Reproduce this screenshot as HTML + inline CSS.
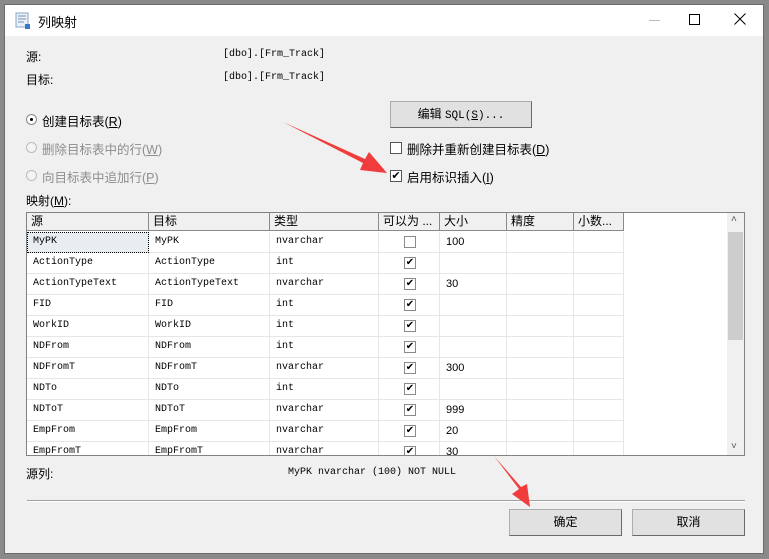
<!DOCTYPE html>
<html><head><meta charset="utf-8"><style>
*{margin:0;padding:0;box-sizing:border-box}
body{width:769px;height:559px;background:#8a8a8a;position:relative;overflow:hidden;font-family:"Liberation Sans","Noto Sans CJK SC",sans-serif;font-size:12px;color:#000}
.win{position:absolute;left:4px;top:4px;width:760px;height:550px;background:#f0f0f0;border:1px solid #6a6a6a}
.title{position:absolute;left:0;top:0;width:758px;height:31px;background:#fff}
.a{position:absolute;white-space:nowrap}
.mono{font-family:"Liberation Mono","Noto Sans CJK SC",monospace;font-size:10px}
.btn{position:absolute;background:#e1e1e1;border:1px solid #adadad;border-right-color:#6a6a6a;border-bottom-color:#6a6a6a;text-align:center}
.cb{position:absolute;width:12px;height:12px;border:1px solid #555;background:#fff}
.grid{position:absolute;left:21px;top:207px;width:719px;height:244px;background:#fff;border:1px solid #828282;overflow:hidden}
.cell{position:absolute;height:21px;line-height:20px;padding-left:6px;border-right:1px solid #e6e6e6;border-bottom:1px solid #e6e6e6;font-family:"Liberation Mono",monospace;font-size:10px;white-space:nowrap}
.hd{position:absolute;top:0;height:18px;line-height:17px;padding-left:4px;background:#f0f0f0;border-right:1px solid #8a8a8a;border-bottom:1px solid #8a8a8a;font-size:12px;white-space:nowrap}
.gcb{position:absolute;width:12px;height:12px;border:1px solid #8a8a8a;background:#fff;font-size:10px;line-height:10px;text-align:center}
</style></head><body>
<div class="win">
<div class="title">
 <svg class="a" style="left:10px;top:7px" width="16" height="18"><rect x="1" y="1" width="12" height="14" fill="#e8f0f8" stroke="#8aa4c4"/><path d="M3 4h8M3 7h8M3 10h6" stroke="#7a94b8"/><rect x="10" y="12" width="5" height="5" fill="#3a78c8"/></svg>
 <div class="a" style="left:33px;top:7px;font-size:13px">列映射</div>
 <div class="a" style="left:644px;top:15px;width:11px;height:1px;background:#bbb"></div>
 <div class="a" style="left:684px;top:9px;width:11px;height:11px;border:1px solid #000"></div>
 <svg class="a" style="left:729px;top:8px" width="12" height="12"><path d="M0.5 0.5L11.5 11.5M11.5 0.5L0.5 11.5" stroke="#000"/></svg>
</div>
<div class="a" style="left:21px;top:43px">源:</div>
<div class="a mono" style="left:218px;top:44px">[dbo].[Frm_Track]</div>
<div class="a" style="left:21px;top:66px">目标:</div>
<div class="a mono" style="left:218px;top:67px">[dbo].[Frm_Track]</div>
<div class="a" style="left:21px;top:109px;width:11px;height:11px;border-radius:50%;border:1px solid #888;background:#fff"><div style="position:absolute;left:3px;top:3px;width:3px;height:3px;border-radius:50%;background:#000"></div></div>
<div class="a" style="left:37px;top:106px;font-size:12.5px">创建目标表(<u>R</u>)</div>
<div class="a" style="left:21px;top:137px;width:11px;height:11px;border-radius:50%;border:1px solid #bbb;background:#f4f4f4"></div>
<div class="a" style="left:37px;top:134px;font-size:12.5px;color:#8d8d8d">删除目标表中的行(<u>W</u>)</div>
<div class="a" style="left:21px;top:165px;width:11px;height:11px;border-radius:50%;border:1px solid #bbb;background:#f4f4f4"></div>
<div class="a" style="left:37px;top:162px;font-size:12.5px;color:#8d8d8d">向目标表中追加行(<u>P</u>)</div>
<div class="btn" style="left:385px;top:96px;width:142px;height:27px;line-height:24px">编辑 <span class="mono" style="font-size:11px">SQL(<u>S</u>)...</span></div>
<div class="cb" style="left:385px;top:137px"></div>
<div class="a" style="left:402px;top:134px;font-size:12.5px">删除并重新创建目标表(<u>D</u>)</div>
<div class="cb" style="left:385px;top:165px;font-size:11px;line-height:10px;text-align:center">✔</div>
<div class="a" style="left:402px;top:162px;font-size:12.5px">启用标识插入(<u>I</u>)</div>
<div class="a" style="left:21px;top:187px">映射(<u>M</u>):</div>
<div class="grid">
 <div class="hd" style="left:0;width:122px">源</div>
 <div class="hd" style="left:122px;width:121px">目标</div>
 <div class="hd" style="left:243px;width:109px">类型</div>
 <div class="hd" style="left:352px;width:61px">可以为 ...</div>
 <div class="hd" style="left:413px;width:67px">大小</div>
 <div class="hd" style="left:480px;width:67px">精度</div>
 <div class="hd" style="left:547px;width:50px">小数...</div>
 <div class="a" style="left:700px;top:0;width:17px;height:242px;background:#f0f0f0"></div>
 <div class="a" style="left:701px;top:19px;width:15px;height:108px;background:#cdcdcd"></div>
 <div class="a" style="left:704px;top:1px;font-size:10px;color:#555">˄</div>
 <div class="a" style="left:704px;top:228px;font-size:10px;color:#555">˅</div>
 <div id="rows"></div>
</div>
<div class="a" style="left:21px;top:460px">源列:</div>
<div class="a mono" style="left:283px;top:462px">MyPK nvarchar (100) NOT NULL</div>
<div class="a" style="left:22px;top:495px;width:718px;height:2px;border-top:1px solid #a0a0a0;border-bottom:1px solid #fff"></div>
<div class="btn" style="left:504px;top:504px;width:113px;height:27px;line-height:25px">确定</div>
<div class="btn" style="left:627px;top:504px;width:113px;height:27px;line-height:25px">取消</div>
</div>
<svg class="a" style="left:0;top:0" width="769" height="559">
<polygon points="283,122 365,159 369,152 387,173 360,170 363,163" fill="#f03c3c"/>
<polygon points="494,456 519,489 512,494 530,507 527,484 521,487" fill="#f03c3c"/>
</svg>
<script>
var d=[["MyPK","MyPK","nvarchar",0,"100"],["ActionType","ActionType","int",1,""],["ActionTypeText","ActionTypeText","nvarchar",1,"30"],["FID","FID","int",1,""],["WorkID","WorkID","int",1,""],["NDFrom","NDFrom","int",1,""],["NDFromT","NDFromT","nvarchar",1,"300"],["NDTo","NDTo","int",1,""],["NDToT","NDToT","nvarchar",1,"999"],["EmpFrom","EmpFrom","nvarchar",1,"20"],["EmpFromT","EmpFromT","nvarchar",1,"30"]];
var h="",L=[0,122,243,352,413,480,547],W=[122,121,109,61,67,67,50];
d.forEach(function(r,i){var t=19+i*21;
for(var c=0;c<7;c++){var txt=c<3?r[c]:c==4?'<span style="font-family:Liberation Sans;font-size:11px">'+r[4]+'</span>':"";var st="left:"+L[c]+"px;top:"+t+"px;width:"+W[c]+"px;";
if(i==0&&c==0)st+="background:#e8edf2;outline:1px dotted #000;outline-offset:-1px;";
h+='<div class="cell" style="'+st+'">'+txt+'</div>';}
h+='<div class="gcb" style="left:377px;top:'+(t+4)+'px">'+(r[3]?'✔':'')+'</div>';});
document.getElementById("rows").innerHTML=h;
</script>
</body></html>
